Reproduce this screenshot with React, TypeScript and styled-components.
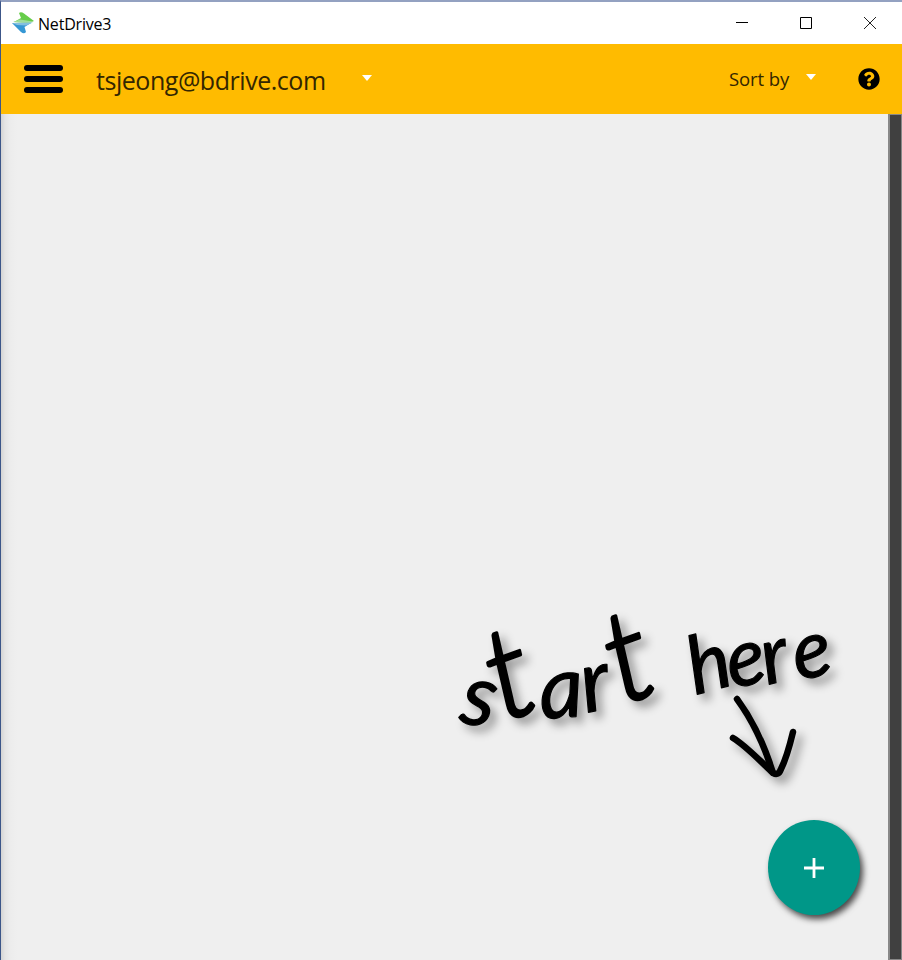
import React from "react";
import styled, { createGlobalStyle } from "styled-components";

const GlobalStyle = createGlobalStyle`
  html, body { margin: 0; padding: 0; overflow: hidden; }
  * { box-sizing: border-box; }
  body { font-family: "Open Sans", "Noto Sans", sans-serif; }
  svg { display: block; }
`;

const Window = styled.div`
  display: flex;
  flex-direction: column;
  width: 902px;
  height: 960px;
  border-top: 2px solid #93a1c1;
  border-left: 1px solid #3c5689;
  background: #efefef;
`;

const TitleBar = styled.header`
  display: flex;
  align-items: center;
  flex: 0 0 42px;
  padding-left: 11px;
  background: #fff;
`;

const Title = styled.span`
  margin: 1px auto 0 4px;
  font-size: 16px;
  letter-spacing: -0.2px;
  line-height: 22px;
  color: #000;
`;

const WindowControls = styled.div`
  display: flex;
`;

const ControlButton = styled.button`
  display: grid;
  place-items: center;
  width: 64px;
  height: 42px;
  padding: 0;
  border: 0;
  background: transparent;
`;

const Toolbar = styled.nav`
  display: flex;
  align-items: center;
  flex: 0 0 70px;
  padding: 0 22px 0 23px;
  background: #ffbb00;
`;

const MenuButton = styled.button`
  display: flex;
  flex-direction: column;
  gap: 5px;
  width: 39px;
  padding: 0;
  border: 0;
  background: transparent;
`;

const MenuLine = styled.span`
  height: 6px;
  border-radius: 3px;
  background: #000;
`;

const Label = styled.span<{ $size: number; $spacing: number }>`
  font-size: ${(p) => p.$size}px;
  letter-spacing: ${(p) => p.$spacing}px;
  line-height: 36px;
  white-space: nowrap;
  color: #332600;
`;

const Account = styled.div`
  display: flex;
  align-items: center;
  justify-content: space-between;
  width: 276px;
  margin: 1px auto 0 33px;
`;

const Sort = styled.div`
  display: flex;
  align-items: center;
  justify-content: space-between;
  width: 87px;
  margin-right: 42px;
`;

const Caret = styled.span`
  width: 0;
  height: 0;
  margin-bottom: 4px;
  border: 5.5px solid transparent;
  border-top: 6px solid #fff;
  border-bottom: 0;
`;

const Body = styled.main`
  display: flex;
  flex: 1;
  min-height: 0;
`;

const Canvas = styled.section`
  display: flex;
  flex-direction: column;
  align-items: flex-end;
  flex: 1;
  padding: 486px 28px 0 0;
  background: linear-gradient(to right, #d4d4d4 0, #e4e4e4 4px, #ececec 9px, #efefef 16px);
`;

const Hint = styled.svg`
  flex: none;
  margin-right: 12px;
  overflow: visible;
  filter: drop-shadow(6px 6px 5px rgba(0, 0, 0, 0.38));
`;

const Handwriting = styled.text`
  font-family: Lato, "Open Sans", sans-serif;
  font-style: italic;
  font-weight: 400;
  fill: #000;
  stroke: #000;
  stroke-width: 1.2px;
  stroke-linejoin: round;
`;

const TallLetter = styled.tspan`
  font-size: 128px;
  font-weight: 300;
  stroke-width: 3px;
`;

const AddButton = styled.button`
  display: grid;
  place-items: center;
  width: 92px;
  height: 95px;
  padding: 0;
  border: 0;
  border-radius: 50%;
  background: #009788;
  box-shadow: 3px 4px 6px rgba(0, 0, 0, 0.7);
`;

const Scrollbar = styled.aside`
  flex: 0 0 14px;
  border: 1px solid #888;
  border-left-width: 2px;
  background: #404040;
`;

const Logo = () => (
  <svg width="22" height="22" viewBox="0 0 22 22">
    <path d="M7 1 Q9 -.8 12 1.5 L22 9 L17 11 L2 10 L9 6Z" fill="#66cd4a" />
    <path d="M1 10 L8 7.5 L21 9.5 L18 11Z" fill="#a0dd9b" />
    <path d="M0 11 L19 11 L12.5 15 L14 20 Q12 22.5 9 20Z" fill="#3597d4" />
    <path d="M0 11 L21 10.5 L14 13.5 L5 13Z" fill="#84bfe0" />
  </svg>
);

const HelpIcon = () => (
  <svg width="22" height="22" viewBox="0 0 512 512">
    <path
      fill="#000"
      d="M504 256c0 136.997-111.043 248-248 248S8 392.997 8 256C8 119.083 119.043 8 256 8s248 111.083 248 248zM262.655 90c-54.497 0-89.255 22.957-116.549 63.758-3.536 5.286-2.353 12.415 2.715 16.258l34.699 26.31c5.205 3.947 12.621 3.008 16.665-2.122 17.864-22.658 30.113-35.797 57.303-35.797 20.429 0 45.698 13.148 45.698 32.958 0 14.976-12.363 22.667-32.534 33.976C247.128 238.528 216 254.941 216 296v4c0 6.627 5.373 12 12 12h56c6.627 0 12-5.373 12-12v-1.333c0-28.462 83.186-29.647 83.186-106.667 0-58.002-60.165-102-116.531-102zM256 338c-25.365 0-46 20.635-46 46 0 25.364 20.635 46 46 46s46-20.636 46-46c0-25.365-20.635-46-46-46z"
    />
  </svg>
);

const StartHint = () => (
  <Hint width="395" height="220" viewBox="453 600 395 220">
    <Handwriting fontSize="86">
      <tspan x="458" y="722" rotate="10">s</tspan>
      <TallLetter x="503" y="722" rotate="-20">t</TallLetter>
      <tspan x="541" y="719" rotate="-4">a</tspan>
      <tspan x="586" y="713" rotate="-12">r</tspan>
      <TallLetter x="622" y="705" rotate="-20">t</TallLetter>
    </Handwriting>
    <Handwriting
      fontSize="80"
      x="695 731 767 797"
      y="695 688 685 680"
      rotate="-15 -10 -14 -10"
    >
      here
    </Handwriting>
    <g fill="none" stroke="#000" strokeWidth="6.5" strokeLinecap="round" strokeLinejoin="round">
      <path d="M737 699 C751 718 764 744 773 773" />
      <path d="M733 738 C745 745 757 758 772 772 Q778 777 781 769 Q787 757 793 732" />
    </g>
  </Hint>
);

export default function App() {
  return (
    <Window>
      <GlobalStyle />
      <TitleBar>
        <Logo />
        <Title>NetDrive3</Title>
        <WindowControls>
          <ControlButton aria-label="Minimize">
            <svg width="12" height="12"><path d="M0 5.5H12" stroke="#000" /></svg>
          </ControlButton>
          <ControlButton aria-label="Maximize">
            <svg width="12" height="12"><path d="M.5.5h11v11H.5z" fill="none" stroke="#000" /></svg>
          </ControlButton>
          <ControlButton aria-label="Close">
            <svg width="12" height="12"><path d="M0 0L12 12M12 0L0 12" stroke="#222" /></svg>
          </ControlButton>
        </WindowControls>
      </TitleBar>
      <Toolbar>
        <MenuButton aria-label="Menu">
          <MenuLine />
          <MenuLine />
          <MenuLine />
        </MenuButton>
        <Account>
          <Label $size={25} $spacing={-0.46}>tsjeong@bdrive.com</Label>
          <Caret />
        </Account>
        <Sort>
          <Label $size={18.5} $spacing={-0.1}>Sort by</Label>
          <Caret />
        </Sort>
        <HelpIcon />
      </Toolbar>
      <Body>
        <Canvas>
          <StartHint />
          <AddButton aria-label="Add">
            <svg width="20" height="20"><path d="M10 0V20M0 10H20" stroke="#fff" strokeWidth="2.8" /></svg>
          </AddButton>
        </Canvas>
        <Scrollbar />
      </Body>
    </Window>
  );
}
